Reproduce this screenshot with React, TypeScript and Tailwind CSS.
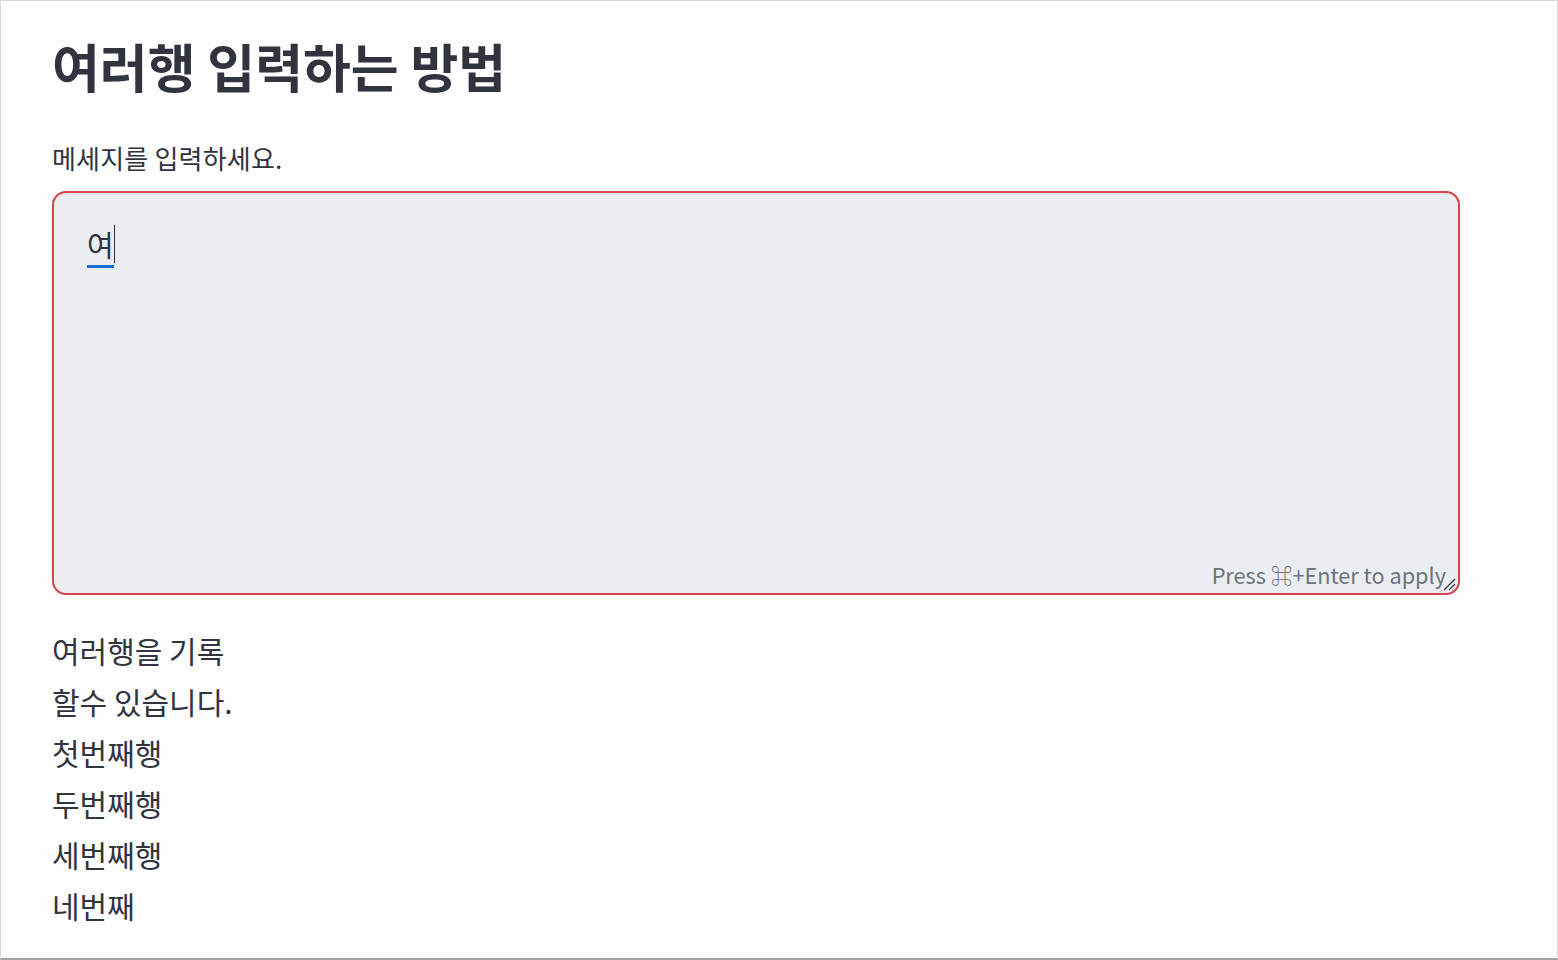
import React from "react";

const FONT = { fontFamily: '"Noto Sans CJK KR", "Noto Sans", sans-serif' };

const lines = ["여러행을 기록", "할수 있습니다.", "첫번째행", "두번째행", "세번째행", "네번째"];

function ResizeHandle() {
  return (
    <svg className="absolute right-[2px] bottom-[2px]" width="14" height="14" viewBox="0 0 14 14">
      <line x1="2" y1="13" x2="13" y2="2" stroke="#3a3a3a" strokeWidth="1.3" />
      <line x1="7" y1="13" x2="13" y2="7" stroke="#3a3a3a" strokeWidth="1.3" />
    </svg>
  );
}

export default function App() {
  return (
    <div
      className="w-full h-[960px] box-border border border-[#d9d9d9] border-b-2 border-b-[#a3a3a3] bg-[#fdfdfd] text-[#31333f] overflow-hidden"
      style={FONT}
    >
      <div className="pl-[51px] pr-[97px] pt-[34px] flex flex-col">
        <h1 className="text-[52px] leading-[62px] font-bold">여러행 입력하는 방법</h1>

        <div className="mt-[46px] text-[26px] leading-[30px] tracking-[0.2px]">메세지를 입력하세요.</div>

        <div className="relative mt-[18px] h-[404px] rounded-[14px] border-2 border-[#d2454c] bg-[#eaedf2]">
          <div className="pl-[33px] pt-[31px] text-[29px] leading-[40px] flex items-start">
            <span className="relative">
              여
              <span className="absolute left-0 right-0 bottom-[-4px] h-[3px] bg-[#1a6fd9]" />
            </span>
            <span className="w-[1.5px] h-[38px] mt-[1px] bg-[#31333f]" />
          </div>
          <div className="absolute right-[12px] bottom-[3px] text-[21.7px] leading-[30px] text-[#6f737d]">
            Press ⌘+Enter to apply
          </div>
          <ResizeHandle />
        </div>

        <div className="mt-[30px] flex flex-col text-[30px] leading-[51px]">
          {lines.map((l) => (
            <div key={l}>{l}</div>
          ))}
        </div>
      </div>
    </div>
  );
}
